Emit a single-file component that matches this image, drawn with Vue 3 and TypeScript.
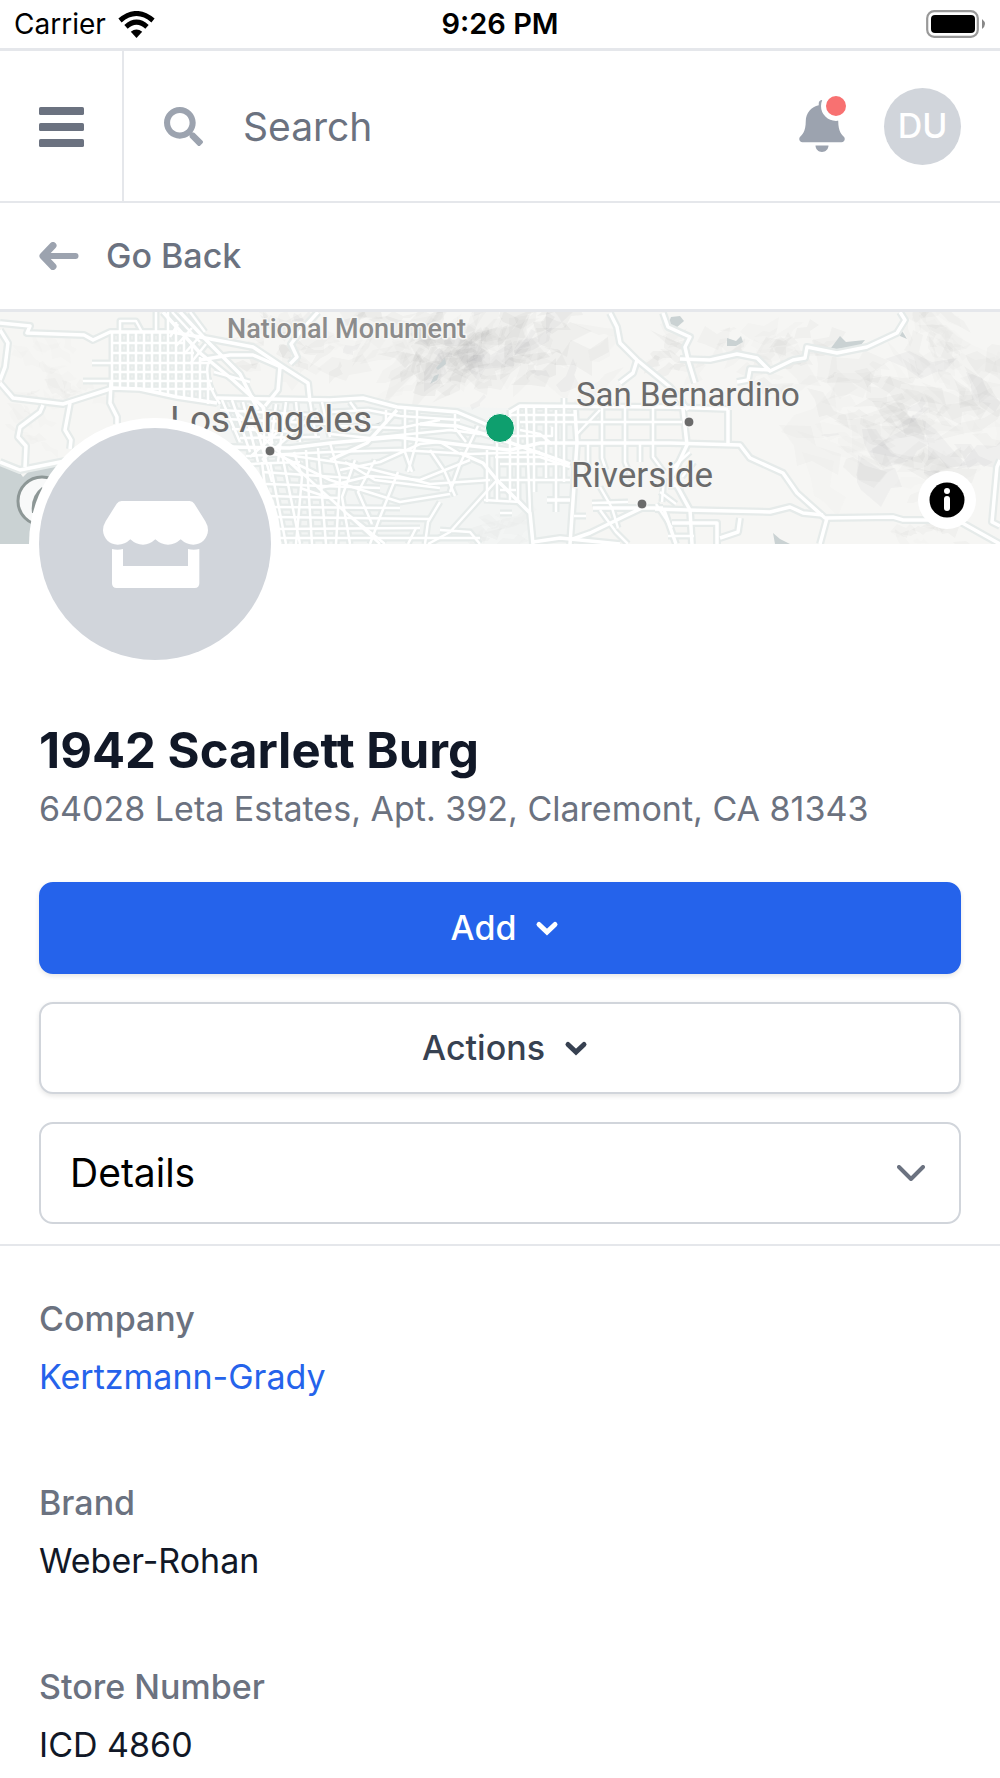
<script setup lang="ts">
import { ref } from 'vue'

interface Detail {
  label: string
  value: string
  href?: string
}

interface Place {
  name: string
  x: number
  y: number
  size: number
  kind: 'park' | 'city'
  dot?: [number, number]
}

const search = ref('')
const section = ref('Details')

const details: Detail[] = [
  { label: 'Company', value: 'Kertzmann-Grady', href: '#company' },
  { label: 'Brand', value: 'Weber-Rohan' },
  { label: 'Store Number', value: 'ICD 4860' },
]

const places: Place[] = [
  { name: 'National Monument', x: 227, y: 26, size: 27, kind: 'park' },
  { name: 'Los Angeles', x: 170, y: 120, size: 37, kind: 'city', dot: [270, 139] },
  { name: 'San Bernardino', x: 576, y: 94, size: 33, kind: 'city', dot: [689, 110] },
  { name: 'Riverside', x: 571, y: 175, size: 35, kind: 'city', dot: [642, 192] },
]

// Small deterministic generator so the relief looks the same on every render.
function seeded(seed: number) {
  let s = seed
  return () => {
    s = (s * 16807) % 2147483647
    return s / 2147483647
  }
}

interface Facet {
  points: string
  opacity: number
}

function relief(seed: number, count: number, x: number, y: number, w: number, h: number, size: number, tilt: number, strength: number): Facet[] {
  const rnd = seeded(seed)
  return Array.from({ length: count }, () => {
    // Averaged positions thin the facets out toward the edges of the range.
    const cx = x + ((rnd() + rnd()) / 2) * w
    const cy = y + ((rnd() + rnd()) / 2) * h
    const len = size * (0.4 + rnd())
    const thick = len * (0.25 + rnd() * 0.5)
    const a = tilt + (rnd() - 0.5) * 1.6
    const corners = [[-1, -0.2], [-0.4, -1], [0.3, -0.5], [0.9, -0.8], [1, 0.3], [0.4, 0.4], [0.1, 1], [-0.5, 0.3]]
    const points = corners
      .map(([px, py]) => {
        const dx = px * len * (0.5 + rnd() * 0.7)
        const dy = py * thick * (0.4 + rnd() * 0.8)
        return `${(cx + dx * Math.cos(a) - dy * Math.sin(a)).toFixed(0)},${(cy + dx * Math.sin(a) + dy * Math.cos(a)).toFixed(0)}`
      })
      .join(' ')
    return { points, opacity: strength * (0.3 + rnd() * 0.7) }
  })
}

const facets: Facet[] = [
  ...relief(11, 130, 300, -25, 330, 125, 24, -0.5, 0.04),
  ...relief(23, 26, 230, -10, 110, 80, 15, 0.5, 0.04),
  ...relief(37, 36, 0, 20, 110, 120, 14, 0.3, 0.02),
  ...relief(41, 90, 770, 30, 260, 160, 28, 0.2, 0.034),
  ...relief(53, 26, 690, 10, 160, 70, 18, -0.2, 0.03),
  ...relief(67, 30, 880, -20, 140, 110, 22, 0.8, 0.026),
  ...relief(71, 14, 640, 15, 70, 60, 14, -0.2, 0.04),
  ...relief(83, 14, 450, 190, 80, 50, 14, -0.3, 0.02),
  ...relief(89, 14, 860, 200, 140, 40, 14, 0.3, 0.03),
]

const highways: string[] = [
  'M0 11 L30 14 27 21 84 23 93 28 110 20 172 20 200 25 253 35 283 55 308 71 310 90',
  'M0 71 L13 86 63 92 113 76 140 77 177 85 217 91',
  'M163 0 L200 41 233 68 263 95 272 132',
  'M180 0 L208 30 240 62 258 98',
  'M0 150 L20 158 70 148',
  'M43 93 L40 100 20 115 18 125 26 134 25 155',
  'M70 91 L65 118 71 128 70 137',
  'M111 70 L110 91 117 105 117 112',
  'M0 18 L8 31 5 55 0 68',
  'M200 48 L230 43 253 43 283 56',
  'M280 55 L278 78 265 94',
  'M318 0 L300 20 291 32 297 45 290 52',
  'M217 86 L330 88',
  'M330 88 L363 86 397 95 457 100 483 111 497 118',
  'M510 100 L520 94 670 95 728 97',
  'M230 135 L290 136 330 131 397 125 463 133 510 138 540 131 670 131 740 133 750 146 783 161 797 181 825 206 893 205 903 208 957 208 1000 232',
  'M420 112 L457 114 497 126 570 152',
  'M460 141 L483 151 497 168 530 201 533 232',
  'M330 148 L367 131 397 98',
  'M577 130 L575 98 M577 131 L570 232',
  'M610 1 L617 15 620 31 637 48 670 75 688 98',
  'M637 48 L633 61 620 71',
  'M663 1 L668 15 690 25 685 35 688 48 695 71',
  'M680 47 L710 48 737 42 757 46 770 59 793 48 805 46 807 35 837 41 867 35 897 21 905 8 900 0',
  'M770 58 L750 57 748 68 737 70',
  'M655 197 L687 198 770 200 790 195 803 201 823 203',
  'M728 98 L728 131 M682 88 L687 133 672 165 690 198 692 232',
  'M827 206 L820 232',
  'M1000 148 L997 155 992 210 1000 214',
  'M720 226 L738 220 740 206 M672 211 L717 211 717 232 M664 198 L676 232',
  'M547 188 L570 188 M570 228 L590 221 623 205 642 196 M593 196 L663 196',
  'M533 230 L560 226 620 232',
]

const streets: string[] = [
  // San Fernando Valley grid
  'M112 20 V78 M120 21 V78 M128 21 V76 M136 21 V76 M144 21 V77 M152 21 V79 M160 21 V80 M168 0 V82 M176 10 V84 M184 25 V86 M192 35 V88 M200 45 V90 M208 70 V92',
  'M112 31 H184 M112 41 H194 M92 51 H210 M112 60 H206 M83 69 H212 M140 77 H214 M156 0 V20 M120 20 V9 H136 L142 20',
  'M172 0 L200 30 M190 0 L205 20 M170 25 L178 12 M176 34 L192 16 M184 42 L200 24 M190 52 L206 32 M214 60 L250 70 M208 52 Q204 70 220 92',
  // Central Los Angeles
  'M222 88 L240 130 M232 88 L250 140 M243 90 L258 150 M250 92 L272 170 M264 95 V150 M276 92 L270 140 M286 90 L278 150 M296 90 L300 130 M310 90 L316 125 M322 90 L330 125',
  'M220 98 L330 104 M226 107 L330 112 M232 117 L300 120 M240 126 L320 125 M246 144 L330 140 M250 152 L300 150 M236 100 L300 160 M300 100 L250 145 M318 98 L262 148',
  'M262 150 L272 232 M270 150 L286 232 M282 142 L300 232 M294 140 L302 165 296 232 M306 138 L312 232 M318 136 L326 232 M330 131 L340 165 336 232',
  'M262 160 L350 166 M266 172 L380 176 M268 184 L340 186 M270 195 L400 196 M274 205 L430 207 M276 217 L420 216 M280 226 L480 226',
  'M272 140 L330 168 400 190 450 182 M280 142 L350 152 430 172 490 168 M290 150 L345 200 385 232 M380 232 L330 186 300 176',
  // San Gabriel Valley
  'M330 100 L368 98 400 104 460 108 M335 114 L400 116 440 108 M330 122 L370 126 450 118 480 122 M350 90 L370 118 M386 98 V112 M405 96 V140 L412 160 M417 98 V128 L408 160 M455 102 V116 L466 130 M478 114 L460 152 450 180 M430 138 L445 160 455 184',
  'M330 140 L400 138 470 142 540 140 M340 158 L380 150 420 132 440 130 460 142 M345 150 L375 168 440 176 M398 160 L380 205 370 232 M355 148 L342 185 350 232 M375 148 L358 180 372 212 M320 176 L370 164 420 168 470 148',
  'M408 232 L416 216 M425 232 L428 210 440 190 M484 188 L520 190 M500 201 L512 201 M497 168 L450 220 428 232 M440 218 L470 220 480 232',
  // Pomona and Ontario
  'M487 138 V190 M497 130 V190 M510 98 V188 M518 94 V188 M526 94 L530 200 M534 94 V180 M546 94 V166 M556 98 V200 M564 86 V170',
  'M495 145 H540 L570 155 M500 152 H560 M500 168 H570 M510 103 H577 M520 110 H577 M505 124 H552 L552 115 M520 118 L540 122 552 132 M500 178 H516',
  // Inland Empire
  'M577 110 H682 M577 122 L600 98 M602 95 V146 L606 158 M625 95 V150 L632 168 M653 95 V145 L664 160 M588 131 V160 M640 131 V150 M600 175 L612 196 618 216 M600 198 L616 220 628 232 M628 190 L592 191 M586 204 H574 M664 166 L662 190 M668 160 H680 M668 174 H684 M656 192 L672 216',
  'M660 180 L676 192 M690 140 L670 158 M694 150 L682 165 M668 224 H694',
]

const lakes: string[] = [
  '445,46 446,52 438,58 436,56',
  '439,62 437,68 430,72 429,74 434,64',
  '671,5 680,4 684,9 676,16 667,15',
  '727,26 736,29 741,24 743,30 736,34 727,34',
  '831,36 840,24 846,30 865,28 860,34 836,37',
  '899,15 904,22 907,27 900,24',
  '773,221 780,227 790,232 775,232',
  '375,112 381,110 379,116',
]
</script>

<template>
  <div class="screen">
    <div class="status-bar">
      <div class="carrier">
        <span>Carrier</span>
        <svg class="wifi" viewBox="0 0 37 27" aria-hidden="true">
          <g fill="none" stroke="#000" stroke-width="5">
            <path d="M2 9.500 Q18.500 -4.500 35 9.500" />
            <path d="M8 15.800 Q18.500 6.500 29 15.800" />
          </g>
          <path d="M12.800 20.800 Q18.500 16.300 24.200 20.800 L18.500 27 Z" />
        </svg>
      </div>
      <time class="clock">9:26 PM</time>
      <svg class="battery" viewBox="0 0 60 28" aria-hidden="true">
        <rect x="1.200" y="1.200" width="50.600" height="25.600" rx="7" fill="none" stroke="#999" stroke-width="2.200" />
        <rect x="5" y="5" width="44" height="18" rx="4" />
        <path d="M56 9 Q62 14 56 19 Z" fill="#888" />
      </svg>
    </div>

    <header class="topbar">
      <button class="menu" type="button" aria-label="Open menu">
        <svg viewBox="0 0 45 40" aria-hidden="true">
          <rect width="45" height="8" rx="1.600" />
          <rect y="16" width="45" height="8" rx="1.600" />
          <rect y="32" width="45" height="8" rx="1.600" />
        </svg>
      </button>
      <label class="search">
        <svg viewBox="0 0 512 512" aria-hidden="true">
          <path d="M505 442.700L405.300 343c-4.500-4.500-10.600-7-17-7H372c27.600-35.300 44-79.700 44-128C416 93.100 322.900 0 208 0S0 93.100 0 208s93.100 208 208 208c48.300 0 92.700-16.400 128-44v16.300c0 6.400 2.500 12.500 7 17l99.700 99.700c9.400 9.400 24.600 9.400 33.900 0l28.300-28.300c9.400-9.400 9.400-24.600.1-34zM208 336c-70.700 0-128-57.200-128-128 0-70.700 57.200-128 128-128 70.700 0 128 57.200 128 128 0 70.700-57.200 128-128 128z" />
        </svg>
        <input v-model="search" type="search" placeholder="Search" aria-label="Search" />
      </label>
      <div class="account">
        <button class="bell" type="button" aria-label="Notifications">
          <svg viewBox="0 0 448 512" aria-hidden="true">
            <path d="M224 512c35.320 0 63.970-28.650 63.970-64H160.030c0 35.350 28.650 64 63.970 64zm215.390-149.710c-19.320-20.760-55.470-51.990-55.470-154.290 0-77.700-54.480-139.900-127.940-155.160V32c0-17.670-14.320-32-31.980-32s-31.980 14.330-31.980 32v20.840C118.560 68.100 64.080 130.300 64.080 208c0 102.300-36.150 133.530-55.470 154.290-6 6.450-8.660 14.160-8.610 21.710.11 16.400 12.980 32 32.100 32h383.800c19.120 0 32-15.600 32.100-32 .05-7.550-2.610-15.270-8.610-21.710z" />
          </svg>
          <span class="unread"></span>
        </button>
        <button class="user" type="button" aria-label="Account">DU</button>
      </div>
    </header>

    <nav class="back">
      <a href="#back">
        <svg viewBox="0 0 40 28" aria-hidden="true">
          <g fill="none" stroke="currentColor" stroke-linecap="round">
            <path d="M14 3.500 L4 14 L14 24.500" stroke-width="7" stroke-linejoin="round" />
            <path d="M5 14 H36.500" stroke-width="6" />
          </g>
        </svg>
        <span>Go Back</span>
      </a>
    </nav>

    <div class="map">
      <svg class="tiles" viewBox="0 0 1000 232" preserveAspectRatio="xMidYMid slice" role="img" aria-label="Map of store location">
        <rect width="1000" height="232" fill="#f6f6f4" />
        <path d="M215 85 L335 92 500 96 580 95 580 232 240 232 Z" fill="#f3f5f4" />
        <polygon v-for="(f, i) in facets" :key="`f${i}`" :points="f.points" fill="#2c2c30" :fill-opacity="f.opacity" />
        <path d="M0 151 L20 161 23 165 30 158 60 152 90 150 90 232 0 232 Z" fill="#cad2d3" />
        <polygon v-for="(l, i) in lakes" :key="`l${i}`" :points="l" fill="#cad2d3" />
        <g class="casing">
          <path v-for="(d, i) in streets" :key="`sc${i}`" :d="d" stroke-width="7" />
          <path v-for="(d, i) in highways" :key="`hc${i}`" :d="d" stroke-width="8" />
        </g>
        <g class="road">
          <path v-for="(d, i) in streets" :key="`s${i}`" :d="d" stroke-width="2.500" />
          <path v-for="(d, i) in highways" :key="`h${i}`" :d="d" stroke-width="3.500" />
        </g>
        <circle cx="42" cy="189" r="24" fill="#f8f9f9" stroke="#8d9796" stroke-width="3" />
        <path d="M42 175 Q30 184 32 201 Q44 202 52 190 Z" fill="#8d9796" />
        <g v-for="p in places" :key="p.name">
          <circle v-if="p.dot" :cx="p.dot[0]" :cy="p.dot[1]" r="5" fill="#6b6b6b" stroke="#fff" stroke-width="1" />
          <text :x="p.x" :y="p.y" :font-size="p.size" :class="p.kind">{{ p.name }}</text>
        </g>
        <circle cx="500" cy="116" r="14.500" fill="#0e9f6e" stroke="#fff" stroke-width="1" />
      </svg>
      <button class="info" type="button" aria-label="Map attribution">
        <svg viewBox="0 0 36 36" aria-hidden="true">
          <circle cx="18" cy="18" r="17.500" />
          <circle cx="18" cy="9" r="3" fill="#fff" />
          <rect x="15" y="14" width="6" height="15" rx="3" fill="#fff" />
        </svg>
      </button>
    </div>

    <main>
      <section class="summary">
        <div class="avatar">
          <svg viewBox="310 300 315 261" aria-hidden="true">
            <path d="M366 300 H570 Q579 300 584 308 L617 361 Q625 374 625 388 C624 412 606 431 581 431 Q560 431 543 415 Q526 431 505 431 Q484 431 467 415 Q450 431 430 431 Q409 431 392 415 Q376 431 354 431 C329 431 311 412 310 388 Q310 374 318 361 L351 308 Q356 300 366 300 Z" />
            <path d="M337 444 Q354 449 370 444 V495 H565 V444 Q582 449 599 444 V547 Q599 561 585 561 H351 Q337 561 337 547 Z" />
          </svg>
        </div>
        <h1>1942 Scarlett Burg</h1>
        <p class="address">64028 Leta Estates, Apt. 392, Claremont, CA 81343</p>
        <div class="actions">
          <button class="btn primary" type="button">
            <span>Add</span>
            <svg viewBox="0 0 24 16" aria-hidden="true"><path d="M4 4.500 L12 12 L20 4.500" /></svg>
          </button>
          <button class="btn" type="button">
            <span>Actions</span>
            <svg viewBox="0 0 24 16" aria-hidden="true"><path d="M4 4.500 L12 12 L20 4.500" /></svg>
          </button>
          <div class="picker">
            <select v-model="section" aria-label="Section">
              <option>Details</option>
            </select>
            <svg viewBox="0 0 28 16" aria-hidden="true"><path d="M2 2 L14 14 L26 2" /></svg>
          </div>
        </div>
      </section>

      <dl class="details">
        <div v-for="d in details" :key="d.label">
          <dt>{{ d.label }}</dt>
          <dd>
            <a v-if="d.href" :href="d.href">{{ d.value }}</a>
            <template v-else>{{ d.value }}</template>
          </dd>
        </div>
      </dl>
    </main>
  </div>
</template>

<style>
body {
  background: #fff;
}
</style>

<style scoped>
.screen,
.screen * {
  box-sizing: border-box;
}

.screen {
  font-family: Inter, "Liberation Sans", sans-serif;
  font-size: 34px;
  line-height: 48px;
  color: #111827;
  background: #fff;
}

svg {
  display: block;
  flex: none;
}

button,
input,
select {
  font: inherit;
  color: inherit;
  margin: 0;
  padding: 0;
  border: 0;
  background: none;
}

a {
  color: inherit;
  text-decoration: none;
}

.status-bar {
  display: grid;
  grid-template-columns: 1fr auto 1fr;
  align-items: center;
  height: 48px;
  padding: 0 14px;
  font-size: 28px;
  color: #000;
}

.carrier {
  display: flex;
  align-items: center;
  gap: 12px;
}

.wifi {
  width: 37px;
  height: 27px;
}

.clock {
  font-size: 29px;
  font-weight: 600;
}

.battery {
  justify-self: end;
  width: 60px;
  height: 28px;
}

.topbar {
  display: flex;
  height: 155px;
  border-top: 3px solid #e5e7eb;
  border-bottom: 2px solid #e5e7eb;
}

.menu {
  display: flex;
  align-items: center;
  padding: 2px 38px 0 39px;
  border-right: 2px solid #e5e7eb;
}

.menu svg {
  width: 45px;
  height: 40px;
  fill: #6b7280;
}

.search {
  display: flex;
  flex: 1;
  align-items: center;
  gap: 40px;
  min-width: 0;
  padding-left: 40px;
  font-size: 39px;
}

.search svg {
  width: 39px;
  height: 39px;
  fill: #9ca3af;
}

.search input {
  flex: 1;
  min-width: 0;
  height: 64px;
  outline: none;
  appearance: none;
}

.search input::placeholder {
  color: #6b7280;
  opacity: 1;
}

.account {
  display: flex;
  align-items: center;
  gap: 39px;
  padding-right: 39px;
}

.bell {
  position: relative;
}

.bell svg {
  width: 46px;
  height: 52px;
  fill: #9ca3af;
}

.unread {
  position: absolute;
  top: -9px;
  right: -6px;
  width: 30px;
  height: 30px;
  border: 5px solid #fff;
  border-radius: 50%;
  background: #f87171;
}

.user {
  width: 77px;
  height: 77px;
  border-radius: 50%;
  background: #d1d5db;
  font-weight: 500;
  color: #fff;
}

.back {
  display: flex;
  align-items: center;
  height: 109px;
  padding: 0 39px;
  border-bottom: 3px solid #e5e7eb;
  font-weight: 500;
  color: #6b7280;
}

.back a {
  display: flex;
  align-items: center;
  gap: 27px;
}

.back svg {
  width: 40px;
  height: 28px;
  color: #9ca3af;
}

.map {
  position: relative;
  height: 232px;
}

.tiles {
  width: 100%;
  height: 100%;
}

.casing,
.road {
  fill: none;
  stroke-linejoin: round;
}

.casing {
  stroke: #e6ebea;
}

.road {
  stroke: #fff;
}

.tiles text {
  font-family: Roboto, "Open Sans", sans-serif;
  fill: #6b6b6b;
  stroke: #f6f6f4;
  stroke-width: 3px;
  stroke-linejoin: round;
  paint-order: stroke;
}

.tiles .park {
  font-weight: 500;
  fill: #8c8c8c;
}

.info {
  position: absolute;
  right: 24px;
  bottom: 15px;
  display: grid;
  place-items: center;
  width: 58px;
  height: 58px;
  border-radius: 50%;
  background: #fff;
}

.info svg {
  width: 36px;
  height: 36px;
}

.summary {
  padding: 0 39px 20px;
  border-bottom: 2px solid #e5e7eb;
}

.avatar {
  position: relative;
  display: grid;
  place-items: center;
  width: 232px;
  height: 232px;
  margin-top: -116px;
  border-radius: 50%;
  background: #d1d5db;
  box-shadow: 0 0 0 10px #fff;
}

.avatar svg {
  width: 105px;
  height: 87px;
  fill: #fff;
}

h1 {
  margin: 57px 0 0;
  font-size: 49px;
  line-height: 68px;
  font-weight: 700;
}

.address {
  margin: 0;
  color: #6b7280;
}

.actions {
  display: flex;
  flex-direction: column;
  gap: 28px;
  margin-top: 49px;
}

.btn {
  display: flex;
  align-items: center;
  justify-content: center;
  height: 92px;
  border: 2px solid #d1d5db;
  border-radius: 14px;
  background: #fff;
  box-shadow: 0 2px 5px rgba(0, 0, 0, 0.1);
  font-weight: 500;
  color: #374151;
}

.btn.primary {
  border-color: #2563eb;
  background: #2563eb;
  color: #fff;
}

.btn svg {
  width: 24px;
  height: 16px;
  margin: 0 -10px 0 19px;
  fill: none;
  stroke: currentColor;
  stroke-width: 5px;
  stroke-linecap: round;
}

.picker {
  position: relative;
}

.picker select {
  display: block;
  width: 100%;
  height: 102px;
  padding: 0 96px 0 29px;
  border: 2px solid #d1d5db;
  border-radius: 14px;
  background: #fff;
  font-size: 39px;
  color: #000;
  appearance: none;
}

.picker svg {
  position: absolute;
  top: 43px;
  right: 36px;
  width: 28px;
  height: 16px;
  fill: none;
  stroke: #6b7280;
  stroke-width: 4px;
  stroke-linecap: round;
  stroke-linejoin: round;
  pointer-events: none;
}

.details {
  display: flex;
  flex-direction: column;
  gap: 78px;
  margin: 0;
  padding: 49px 39px 0;
}

dt {
  font-weight: 500;
  color: #6b7280;
}

dd {
  margin: 10px 0 0;
}

dd a {
  color: #2563eb;
}
</style>
